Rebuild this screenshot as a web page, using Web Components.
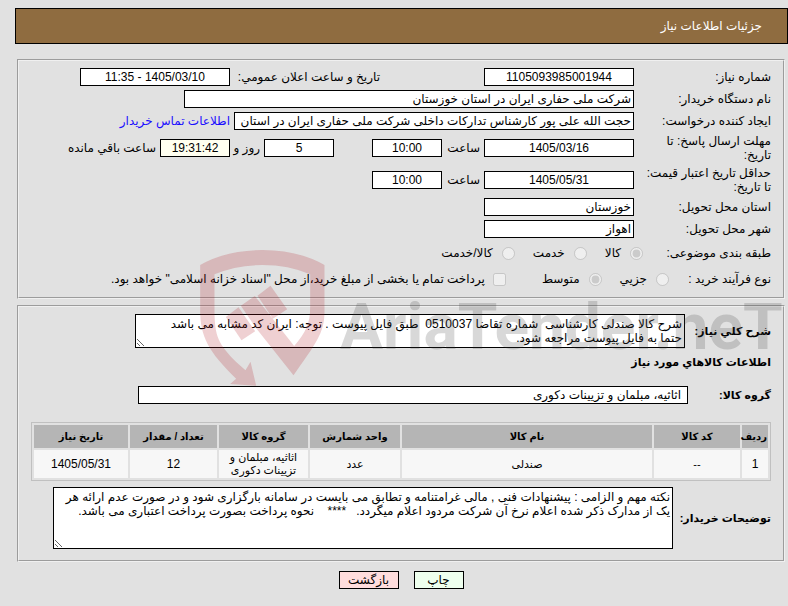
<!DOCTYPE html>
<html lang="fa" dir="rtl">
<head>
<meta charset="utf-8">
<title>جزئیات اطلاعات نیاز</title>
<style>
    body {
        margin: 0;
        padding: 8px 0;
        background: #e1e1e1;
        color: #000;
        font: 12px/14px "Liberation Sans", "DejaVu Sans", sans-serif;
        position: relative;
    }

    main {
        margin: 15px 3px 0 17px;
        display: flex;
        flex-direction: column;
        gap: 6px;
    }
</style>
</head>
<body>
    <page-header>جزئیات اطلاعات نیاز</page-header>

    <main>
        <form-section>
            <form-row label="شماره نیاز:" value="1105093985001944" center>
                <inline-field before="تاریخ و ساعت اعلان عمومي:" value="1405/03/10 - 11:35" style="--field-width: 150px; --before-width: 146px; margin-right: 100px"></inline-field>
            </form-row>
            <form-row label="نام دستگاه خریدار:" value="شرکت ملی حفاری ایران در استان خوزستان" style="--field-width: 450px"></form-row>
            <form-row label="ایجاد کننده درخواست:" value="حجت الله علی پور کارشناس تدارکات داخلی شرکت ملی حفاری ایران در استان" style="--field-width: 400px">
                <contact-link>اطلاعات تماس خریدار</contact-link>
            </form-row>
            <form-row label="مهلت ارسال پاسخ: تا تاریخ:" value="1405/03/16" center>
                <inline-field before="ساعت" value="10:00" style="--before-width: 34px"></inline-field>
                <inline-field value="5" after="روز و" style="--after-width: 26px; margin-right: 34px"></inline-field>
                <inline-field value="19:31:42" after="ساعت باقي مانده" style="--field-bg: #fffff0"></inline-field>
            </form-row>
            <form-row label="حداقل تاریخ اعتبار قیمت: تا تاریخ:" value="1405/05/31" center>
                <inline-field before="ساعت" value="10:00" style="--before-width: 34px"></inline-field>
            </form-row>
            <form-row label="استان محل تحویل:" value="خوزستان"></form-row>
            <form-row label="شهر محل تحویل:" value="اهواز"></form-row>
            <choice-row label="طبقه بندی موضوعی:" options="کالا|خدمت|کالا/خدمت" selected="0" style="--label-width: 128px"></choice-row>
            <choice-row label="نوع فرآیند خرید :" options="جزیي|متوسط" selected="1" style="--label-width: 102px">
                <check-item>پرداخت تمام یا بخشی از مبلغ خرید،از محل "اسناد خزانه اسلامی" خواهد بود.</check-item>
            </choice-row>
        </form-section>

        <form-section style="--bottom-space: 9px">
            <note-row label="شرح کلي نیاز:" rows="2" style="--label-width: 86px; --area-left: 104px">شرح کالا صندلی کارشناسی&nbsp; شماره تقاضا 0510037&nbsp; طبق فایل پیوست . توجه: ایران کد مشابه می باشد
حتما به فایل پیوست مراجعه شود.</note-row>
            <section-title>اطلاعات کالاهاي مورد نیاز</section-title>
            <form-row label="گروه کالا:" value="اثاثیه، مبلمان و تزیینات دکوری" style="--label-width: 83px; --label-font: bold 11px/14px 'Liberation Sans', 'DejaVu Sans', sans-serif; --field-width: 550px; --field-pad: 6px; margin-bottom: 16px"></form-row>
            <goods-table></goods-table>
            <note-row label="توضیحات خریدار:" rows="4" style="--label-width: 98px; --area-left: 22px; margin-top: 4px">نکته مهم و الزامی : پیشنهادات فنی , مالی غرامتنامه و تطابق می بایست در سامانه بارگزاری شود و در صورت عدم ارائه هر
یک از مدارک ذکر شده اعلام نرخ آن شرکت مردود اعلام میگردد.&nbsp;&nbsp; ****&nbsp;&nbsp;&nbsp; نحوه پرداخت بصورت پرداخت اعتباری می باشد.</note-row>
        </form-section>

        <action-bar></action-bar>
    </main>

    <site-watermark></site-watermark>

<script>
const fieldStyles = `
    * {
        box-sizing: border-box;
    }

    input[type=text], textarea {
        font: inherit;
        color: #000;
        margin: 0;
        border: 1px solid #000;
        border-radius: 0;
        background: var(--field-bg, #fff);
        outline: none;
    }

    input[type=text] {
        height: 18px;
        padding: 0 var(--field-pad, 2px);
        width: var(--field-width, 150px);
        flex: none;
    }

    .center {
        text-align: center;
    }
`;

class PageHeader extends HTMLElement {
    connectedCallback() {
        this.attachShadow({ mode: 'open' }).innerHTML = `
            <style>
                :host {
                    display: block;
                    margin-left: 15px;
                    border: 1px solid #000;
                    background: #8f6c40;
                    color: #fff;
                    padding: 10px 25px;
                }

                h1 {
                    margin: 0;
                    font: inherit;
                }
            </style>
            <h1><slot></slot></h1>
        `;
    }
}

class FormSection extends HTMLElement {
    connectedCallback() {
        this.attachShadow({ mode: 'open' }).innerHTML = `
            <style>
                :host {
                    display: block;
                }

                fieldset {
                    margin: 0;
                    min-width: 0;
                    padding: 5px 12px var(--bottom-space, 5px);
                    border: 2px groove #f0f0f0;
                }
            </style>
            <fieldset><slot></slot></fieldset>
        `;
    }
}

class FormRow extends HTMLElement {
    connectedCallback() {
        this.attachShadow({ mode: 'open' }).innerHTML = `
            <style>
                ${fieldStyles}
                :host {
                    display: flex;
                    align-items: center;
                    gap: 4px;
                    padding: 2px 0;
                }

                label {
                    flex: none;
                    width: calc(var(--label-width, 137px) - 4px);
                    font: var(--label-font, inherit);
                }
            </style>
            <label for="field">${this.getAttribute('label')}</label>
            <input type="text" id="field" class="${this.hasAttribute('center') ? 'center' : ''}" value="${this.getAttribute('value')}" readonly>
            <slot></slot>
        `;
    }
}

class InlineField extends HTMLElement {
    connectedCallback() {
        const before = this.getAttribute('before');
        const after = this.getAttribute('after');
        const input = `<input type="text" id="field" class="center" value="${this.getAttribute('value')}" readonly>`;

        this.attachShadow({ mode: 'open' }).innerHTML = `
            <style>
                ${fieldStyles}
                :host {
                    display: flex;
                    align-items: center;
                    gap: 4px;
                }

                label {
                    white-space: nowrap;
                }

                .before {
                    width: var(--before-width, auto);
                }

                .after {
                    width: var(--after-width, auto);
                }

                input[type=text] {
                    width: var(--field-width, 70px);
                }
            </style>
            ${before ? `<label class="before" for="field">${before}</label>` : ''}
            ${input}
            ${after ? `<label class="after" for="field">${after}</label>` : ''}
        `;
    }
}

class ContactLink extends HTMLElement {
    connectedCallback() {
        this.attachShadow({ mode: 'open' }).innerHTML = `
            <style>
                a {
                    color: #1a0dff;
                    text-decoration: none;
                    white-space: nowrap;
                }
            </style>
            <a href="#"><slot></slot></a>
        `;
    }
}

class ChoiceRow extends HTMLElement {
    connectedCallback() {
        const selected = Number(this.getAttribute('selected'));
        const items = this.getAttribute('options').split('|').map((text, i) => `
            <label><input type="radio" name="choice" ${i === selected ? 'checked' : ''} disabled>${text}</label>
        `).join('');

        this.attachShadow({ mode: 'open' }).innerHTML = `
            <style>
                :host {
                    display: flex;
                    align-items: center;
                    min-height: 26px;
                }

                .title {
                    flex: none;
                    width: var(--label-width);
                }

                .items {
                    display: flex;
                    gap: 18px;
                }

                label {
                    display: flex;
                    align-items: center;
                    gap: 9px;
                    white-space: nowrap;
                }

                input {
                    margin: 0;
                }
            </style>
            <span class="title" id="title">${this.getAttribute('label')}</span>
            <div class="items" role="radiogroup" aria-labelledby="title">${items}</div>
            <slot></slot>
        `;
    }
}

class CheckItem extends HTMLElement {
    connectedCallback() {
        this.attachShadow({ mode: 'open' }).innerHTML = `
            <style>
                :host {
                    display: block;
                    margin-right: 36px;
                }

                label {
                    display: flex;
                    align-items: center;
                    gap: 8px;
                    white-space: nowrap;
                }

                input {
                    margin: 0;
                }
            </style>
            <label><input type="checkbox" disabled><slot></slot></label>
        `;
    }
}

class NoteRow extends HTMLElement {
    connectedCallback() {
        this.attachShadow({ mode: 'open' }).innerHTML = `
            <style>
                ${fieldStyles}
                :host {
                    display: flex;
                    align-items: center;
                    padding: 2px 0;
                    padding-left: var(--area-left);
                }

                label {
                    flex: none;
                    width: var(--label-width);
                    font-size: 11px;
                    font-weight: bold;
                    white-space: nowrap;
                }

                textarea {
                    flex: 1;
                    min-width: 0;
                    padding: 2px;
                    overflow: hidden;
                }
            </style>
            <label for="note">${this.getAttribute('label')}</label>
            <textarea id="note" rows="${this.getAttribute('rows')}" readonly></textarea>
        `;
        this.shadowRoot.querySelector('textarea').value = this.textContent;
    }
}

class SectionTitle extends HTMLElement {
    connectedCallback() {
        this.attachShadow({ mode: 'open' }).innerHTML = `
            <style>
                :host {
                    display: block;
                    margin: 5px 0 15px;
                }

                h2 {
                    margin: 0;
                    font-size: 11px;
                }
            </style>
            <h2><slot></slot></h2>
        `;
    }
}

class GoodsTable extends HTMLElement {
    connectedCallback() {
        this.attachShadow({ mode: 'open' }).innerHTML = `
            <style>
                :host {
                    display: block;
                }

                table {
                    width: 100%;
                    table-layout: fixed;
                    border: 1px solid #c0c0c0;
                    border-spacing: 2px;
                    font-size: 11px;
                    line-height: 13px;
                    text-align: center;
                }

                th, td {
                    padding: 1px;
                }

                th {
                    height: 21px;
                    background: #b5b5b5;
                    font-size: 10px;
                    white-space: nowrap;
                }

                td {
                    height: 26px;
                    background: #f7f7f7;
                }

                .number {
                    font-size: 12px;
                }
            </style>
            <table>
                <colgroup>
                    <col style="width: 26px"><col style="width: 86px"><col>
                    <col style="width: 90px"><col style="width: 89px">
                    <col style="width: 87px"><col style="width: 94px">
                </colgroup>
                <thead>
                    <tr>
                        <th>ردیف</th><th>کد کالا</th><th>نام کالا</th><th>واحد شمارش</th>
                        <th>گروه کالا</th><th>تعداد / مقدار</th><th>تاریخ نیاز</th>
                    </tr>
                </thead>
                <tbody>
                    <tr>
                        <td class="number">1</td><td>--</td><td>صندلی</td><td>عدد</td>
                        <td>اثاثیه، مبلمان و تزیینات دکوری</td><td class="number">12</td><td class="number">1405/05/31</td>
                    </tr>
                </tbody>
            </table>
        `;
    }
}

class ActionBar extends HTMLElement {
    connectedCallback() {
        this.attachShadow({ mode: 'open' }).innerHTML = `
            <style>
                :host {
                    display: flex;
                    justify-content: center;
                    gap: 15px;
                    margin-top: 3px;
                }

                button {
                    height: 18px;
                    padding: 0;
                    border: 1px solid #000;
                    font: inherit;
                    color: #000;
                }

                .print {
                    width: 50px;
                    background: #efe;
                }

                .back {
                    width: 60px;
                    background: #fdd;
                }
            </style>
            <button type="button" class="print">چاپ</button>
            <button type="button" class="back">بازگشت</button>
        `;
    }
}

class SiteWatermark extends HTMLElement {
    connectedCallback() {
        this.attachShadow({ mode: 'open' }).innerHTML = `
            <style>
                :host {
                    position: absolute;
                    top: 250px;
                    left: 200px;
                    right: 0;
                    display: flex;
                    gap: 15px;
                    direction: ltr;
                    pointer-events: none;
                }

                svg {
                    flex: none;
                    width: 125px;
                    height: 136px;
                    fill: rgba(175, 20, 30, .2);
                }

                span {
                    margin-top: 40px;
                    font: bold 64px/76px Roboto, sans-serif;
                    color: rgba(60, 60, 60, .2);
                }
            </style>
            <svg viewBox="600 180 374 408" aria-hidden="true">
                <path d="M600 225Q680 180 787 180T973 225V365C973 430 945 462 880 556L768 415L722 347L764 318L882 468C918 425 930 400 930 350V253Q865 225 787 225T643 253V360C643 440 655 462 708 516L736 541L751 515L768 587L690 582L708 566C625 485 600 440 600 360Z"/>
                <path d="M677 381L715 352L765 424L724 451Z"/>
                <path d="M772 317L811 287L861 358L818 386Z"/>
            </svg>
            <span>AriaTender.neT</span>
        `;
    }
}

customElements.define('page-header', PageHeader);
customElements.define('form-section', FormSection);
customElements.define('form-row', FormRow);
customElements.define('inline-field', InlineField);
customElements.define('contact-link', ContactLink);
customElements.define('choice-row', ChoiceRow);
customElements.define('check-item', CheckItem);
customElements.define('note-row', NoteRow);
customElements.define('section-title', SectionTitle);
customElements.define('goods-table', GoodsTable);
customElements.define('action-bar', ActionBar);
customElements.define('site-watermark', SiteWatermark);
</script>
</body>
</html>
